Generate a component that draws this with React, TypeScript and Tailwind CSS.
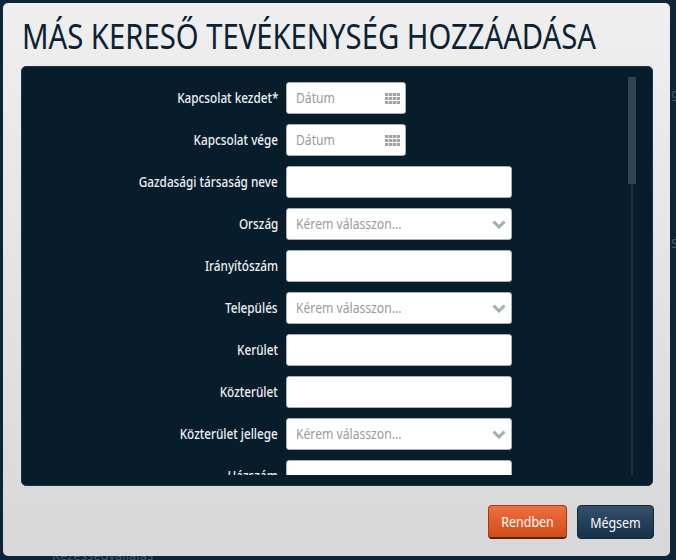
import React from "react";

function Label({ children }: { children: React.ReactNode }) {
  return (
    <label className="w-[264px] pr-[8px] text-right text-[13.5px] font-medium text-[#eef0f1] leading-[20px]">
      <span className="inline-block whitespace-nowrap origin-right scale-x-[0.87]">{children}</span>
    </label>
  );
}

function Placeholder({ children }: { children: React.ReactNode }) {
  return (
    <span className="inline-block whitespace-nowrap text-[13.5px] leading-[20px] text-[#9a9a9a] origin-left scale-x-[0.9]">
      {children}
    </span>
  );
}

function DateField({ label }: { label: string }) {
  return (
    <div className="flex items-center h-[32px]">
      <Label>{label}</Label>
      <div className="w-[120px] h-[32px] bg-white rounded-[3px] border border-[#a9aeb1] flex items-center justify-between pl-[9px] pr-[5px]">
        <Placeholder>Dátum</Placeholder>
        <svg width="15" height="11" viewBox="0 0 15 11" fill="#a3a3a3">
          {[0, 4, 8].map((y) =>
            [0, 4, 8, 12].map((x) => <rect key={`${x}-${y}`} x={x} y={y} width="3.4" height="3" />)
          )}
        </svg>
      </div>
    </div>
  );
}

function TextField({ label }: { label: string }) {
  return (
    <div className="flex items-center h-[32px]">
      <Label>{label}</Label>
      <div className="w-[226px] h-[32px] bg-white rounded-[3px] border border-[#a9aeb1]" />
    </div>
  );
}

function SelectField({ label }: { label: string }) {
  return (
    <div className="flex items-center h-[32px]">
      <Label>{label}</Label>
      <div className="w-[226px] h-[32px] bg-white rounded-[3px] border border-[#a9aeb1] flex items-center justify-between pl-[9px] pr-[5px]">
        <Placeholder>Kérem válasszon...</Placeholder>
        <svg width="14" height="9" viewBox="0 0 14 9" fill="none" stroke="#9fb0b4" strokeWidth="3">
          <path d="M1.5 1.5 L7 7 L12.5 1.5" />
        </svg>
      </div>
    </div>
  );
}

export default function App() {
  return (
    <div className="w-[676px] h-[560px] overflow-hidden bg-[#0c2539] pt-[3px] pl-[3px] font-['Noto_Sans',sans-serif] relative">
      <span className="absolute left-[52px] top-[546px] text-[13px] text-[#4a5a66]">Kezességvállalás</span>
      <span className="absolute left-[671px] top-[84px] text-[13px] text-[#4a5a66]">g</span>
      <span className="absolute left-[671px] top-[234px] text-[13px] text-[#4a5a66]">S</span>
      <div className="relative w-[667px] h-[553px] rounded-[5px] bg-gradient-to-b from-[#efefef] to-[#d8d8d8] flex flex-col">
        <h1 className="h-[63px] pl-[19px] pt-[11px] text-[34px] leading-[44px] text-[#0b2233] whitespace-nowrap">
          <span className="inline-block origin-left scale-x-[0.86]">MÁS KERESŐ TEVÉKENYSÉG HOZZÁADÁSA</span>
        </h1>
        <div className="mx-[18px] w-[632px] h-[420px] rounded-[5px] bg-[#071d2b] border border-[#12364d] flex pt-[15px]">
          <div className="h-[393px] overflow-hidden flex flex-col gap-[10px] w-[606px]">
            <DateField label="Kapcsolat kezdet*" />
            <DateField label="Kapcsolat vége" />
            <TextField label="Gazdasági társaság neve" />
            <SelectField label="Ország" />
            <TextField label="Irányítószám" />
            <SelectField label="Település" />
            <TextField label="Kerület" />
            <TextField label="Közterület" />
            <SelectField label="Közterület jellege" />
            <TextField label="Házszám" />
          </div>
          <div className="mt-[-5px] h-[398px] w-[8px] flex flex-col items-center">
            <div className="w-[8px] h-[107px] bg-[#2f4553] shrink-0" />
            <div className="w-[2px] flex-1 bg-[#1c3442]" />
          </div>
        </div>
        <div className="flex justify-end gap-[10px] pr-[16px] pt-[19px]">
          <button className="w-[79px] h-[34px] rounded-[4px] bg-gradient-to-b from-[#ee6f3f] to-[#d24c19] border border-[#a63a12] border-b-[2px] border-b-[#5c210b] text-white text-[14px]">
            <span className="inline-block scale-x-[0.89]">Rendben</span>
          </button>
          <button className="w-[77px] h-[34px] rounded-[4px] bg-gradient-to-b from-[#34506a] to-[#16314a] border border-[#12293d] text-white text-[14px]">
            <span className="inline-block scale-x-[0.89]">Mégsem</span>
          </button>
        </div>
      </div>
    </div>
  );
}
